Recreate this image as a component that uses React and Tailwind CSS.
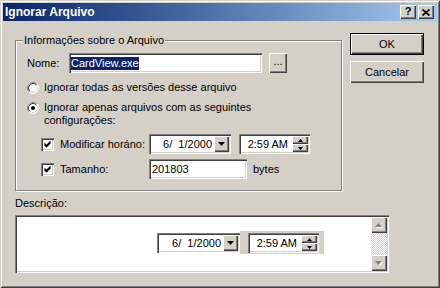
import React from 'react';

const raised = 'bg-[#d4d0c8] shadow-[inset_1px_1px_0_#ffffff,inset_-1px_-1px_0_#404040,inset_-2px_-2px_0_#808080]';
const sunken = 'shadow-[inset_1px_1px_0_#808080,inset_2px_2px_0_#404040,inset_-1px_-1px_0_#ffffff,inset_-2px_-2px_0_#d4d0c8]';

function Radio({ checked }) {
  return (
    <svg width="12" height="12" viewBox="0 0 12 12" className="shrink-0">
      <circle cx="6" cy="6" r="5.5" fill="#ffffff" stroke="#ffffff" />
      <circle cx="6" cy="6" r="4.5" fill="#ffffff" stroke="#d4d0c8" />
      <path d="M2.11 9.89 A5.5 5.5 0 0 1 9.89 2.11" fill="none" stroke="#808080" />
      <path d="M2.82 9.18 A4.5 4.5 0 0 1 9.18 2.82" fill="none" stroke="#404040" />
      {checked && <circle cx="6" cy="6" r="2" fill="#000000" />}
    </svg>
  );
}

function Check() {
  return (
    <div className={`w-[13px] h-[13px] shrink-0 bg-white ${sunken} flex items-center justify-center`}>
      <svg width="7" height="7" viewBox="0 0 7 7">
        <path d="M0.5 2.5 L2.5 4.5 L6.5 0.5 M0.5 3.8 L2.5 5.8 L6.5 1.8" fill="none" stroke="#000" strokeWidth="1.2" />
      </svg>
    </div>
  );
}

function DownTri({ color = '#000' }) {
  return (
    <svg width="7" height="4" viewBox="0 0 7 4">
      <polygon points="0,0 7,0 3.5,4" fill={color} />
    </svg>
  );
}

function DatePicker({ width = 'w-[82px]' }) {
  return (
    <div className={`${width} h-[20px] bg-white ${sunken} flex items-center`}>
      <span className="ml-auto mr-[2px] whitespace-pre">6/  1/2000</span>
      <div className={`w-[15px] h-[16px] mr-[2px] ${raised} flex items-center justify-center`}>
        <DownTri />
      </div>
    </div>
  );
}

function TimePicker() {
  return (
    <div className={`w-[71px] h-[20px] bg-white ${sunken} flex items-center`}>
      <span className="ml-auto mr-[4px]">2:59 AM</span>
      <div className="w-[16px] h-[16px] mr-[2px] flex flex-col">
        <div className={`h-[8px] ${raised} flex items-center justify-center`}>
          <svg width="5" height="3" viewBox="0 0 5 3"><polygon points="2.5,0 5,3 0,3" fill="#000" /></svg>
        </div>
        <div className={`h-[8px] ${raised} flex items-center justify-center`}>
          <svg width="5" height="3" viewBox="0 0 5 3"><polygon points="0,0 5,0 2.5,3" fill="#000" /></svg>
        </div>
      </div>
    </div>
  );
}

function ScrollArrow({ up }) {
  return (
    <div className={`h-[16px] ${raised} flex items-center justify-center`}>
      <svg width="8" height="5" viewBox="0 0 8 5">
        {up ? (
          <>
            <polygon points="4.5,1 8,5 1,5" fill="#ffffff" />
            <polygon points="3.5,0 7,4 0,4" fill="#808080" />
          </>
        ) : (
          <>
            <polygon points="1,1 8,1 4.5,5" fill="#ffffff" />
            <polygon points="0,0 7,0 3.5,4" fill="#808080" />
          </>
        )}
      </svg>
    </div>
  );
}

export default function App() {
  return (
    <div className="w-[440px] h-[288px] bg-[#d4d0c8] p-[3px] flex flex-col overflow-hidden text-black text-[11px] leading-[13px] font-['Liberation_Sans',Arial,sans-serif] shadow-[inset_1px_1px_0_#d4d0c8,inset_-1px_-1px_0_#404040,inset_2px_2px_0_#ffffff,inset_-2px_-2px_0_#808080]">
      {/* title bar */}
      <div className="h-[18px] shrink-0 flex items-center pl-[2px] pr-[3px] bg-linear-to-r from-[#0a246a] to-[#a6caf0]">
        <span className="font-bold text-white text-[12px]">Ignorar Arquivo</span>
        <div className="ml-auto flex gap-[2px]">
          <div className={`w-[16px] h-[14px] ${raised} flex items-center justify-center font-bold text-[11px] leading-none pb-[1px]`}>?</div>
          <div className={`w-[16px] h-[14px] ${raised} flex items-center justify-center`}>
            <svg width="8" height="7" viewBox="0 0 8 7">
              <path d="M0.5 0.5 L7.5 6.5 M7.5 0.5 L0.5 6.5" stroke="#000" strokeWidth="1.7" />
            </svg>
          </div>
        </div>
      </div>

      {/* body */}
      <div className="flex-1 flex flex-col pl-[12px]">
        <div className="flex items-start">
          <div className="relative mt-[19px] w-[327px] h-[151px] border border-[#808080] shadow-[inset_1px_1px_0_#ffffff,1px_1px_0_#ffffff] pl-[11px]">
            <span className="absolute left-[7px] top-[-7px] px-[1px] bg-[#d4d0c8]">Informações sobre o Arquivo</span>

            <div className="mt-[12px] flex items-center h-[20px]">
              <span className="w-[42px]">Nome:</span>
              <div className={`w-[193px] h-[20px] bg-white ${sunken} flex items-center pl-[2px]`}>
                <span className="bg-[#0a246a] text-white">CardView.exe</span>
              </div>
              <div className={`ml-[7px] w-[18px] h-[20px] ${raised} flex items-center justify-center pb-[3px]`}>...</div>
            </div>

            <div className="mt-[8px] flex items-center h-[13px]">
              <Radio />
              <span className="ml-[5px]">Ignorar todas as versões desse arquivo</span>
            </div>

            <div className="mt-[7px] flex items-start">
              <div className="mt-[1px]"><Radio checked /></div>
              <span className="ml-[5px]">Ignorar apenas arquivos com as seguintes<br />configurações:</span>
            </div>

            <div className="mt-[7px] flex items-center h-[20px] pl-[14px]">
              <Check />
              <span className="ml-[6px] w-[89px]">Modificar horáno:</span>
              <DatePicker />
              <div className="ml-[8px]"><TimePicker /></div>
            </div>

            <div className="mt-[5px] flex items-center h-[20px] pl-[14px]">
              <Check />
              <span className="ml-[6px] w-[89px]">Tamanho:</span>
              <div className={`w-[98px] h-[20px] bg-white ${sunken} flex items-center pl-[3px]`}>201803</div>
              <span className="ml-[6px]">bytes</span>
            </div>
          </div>

          <div className="ml-[8px] mt-[12px] flex flex-col gap-[6px]">
            <div className="w-[74px] h-[22px] border border-black">
              <div className={`w-full h-full ${raised} flex items-center justify-center`}>OK</div>
            </div>
            <div className={`w-[74px] h-[22px] ${raised} flex items-center justify-center`}>Cancelar</div>
          </div>
        </div>

        <div className="mt-[6px]">Descrição:</div>

        <div className={`mt-[5px] w-[374px] h-[58px] bg-white ${sunken} p-[2px] flex`}>
          <div className="flex-1 pl-[140px] pt-[14px]">
            <div className="flex items-start">
              <div className="mt-[2px]"><DatePicker width="w-[83px]" /></div>
              <div className="w-[84px] h-[23px] bg-[#d4d0c8] pl-[8px] pt-[2px]">
                <TimePicker />
              </div>
            </div>
          </div>
          <div className="w-[16px] flex flex-col">
            <ScrollArrow up />
            <div className="flex-1 bg-[repeating-conic-gradient(#d4d0c8_0_25%,#ffffff_0_50%)] bg-[length:2px_2px]" />
            <ScrollArrow />
          </div>
        </div>
      </div>
    </div>
  );
}
